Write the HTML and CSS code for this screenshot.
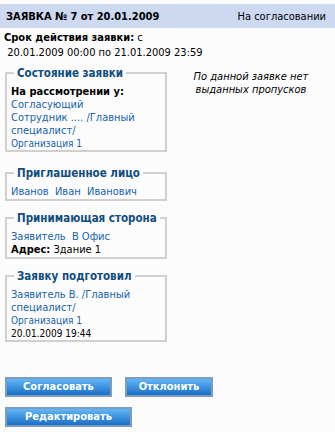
FILE: index.html
```html
<!DOCTYPE html>
<html lang="ru">
<head>
<meta charset="utf-8">
<title>Заявка № 7</title>
<link rel="stylesheet" href="styles.css">
</head>
<body>
<div class="header">
  <span class="header-title">ЗАЯВКА № 7 от 20.01.2009</span>
  <span class="header-status">На согласовании</span>
</div>
<div class="validity">
  <b>Срок действия заявки:</b> с<br>
  &nbsp;20.01.2009 00:00 по 21.01.2009 23:59
</div>
<div class="main">
  <div class="left">
    <fieldset class="box box-state">
      <legend>Состояние заявки</legend>
      <div class="line"><b>На рассмотрении у:</b></div>
      <div class="line link">Согласующий</div>
      <div class="line link">Сотрудник .... /Главный</div>
      <div class="line link">специалист/</div>
      <div class="line link small">Организация 1</div>
    </fieldset>
    <fieldset class="box box-guest">
      <legend>Приглашенное лицо</legend>
      <div class="line link">Иванов&nbsp; Иван&nbsp; Иванович</div>
    </fieldset>
    <fieldset class="box box-host">
      <legend>Принимающая сторона</legend>
      <div class="line link">Заявитель&nbsp; В Офис</div>
      <div class="line"><b>Адрес:</b> Здание 1</div>
    </fieldset>
    <fieldset class="box box-author">
      <legend>Заявку подготовил</legend>
      <div class="line link">Заявитель В. /Главный</div>
      <div class="line link">специалист/</div>
      <div class="line link small">Организация 1</div>
      <div class="line small">20.01.2009 19:44</div>
    </fieldset>
  </div>
  <div class="right">
    <div class="note">По данной заявке нет<br>выданных пропусков</div>
  </div>
</div>
<div class="buttons">
  <div class="btn-row">
    <button class="btn btn-approve">Согласовать</button>
    <button class="btn btn-reject">Отклонить</button>
  </div>
  <div class="btn-row">
    <button class="btn btn-edit">Редактировать</button>
  </div>
</div>
</body>
</html>
```

FILE: styles.css
```css
html, body {
  margin: 0;
  padding: 0;
  background: #fcfcfc;
}
body {
  font-family: "DejaVu Sans Condensed", "DejaVu Sans", sans-serif;
  font-size: 11px;
  color: #000;
}
.header {
  margin-top: 4px;
  height: 24px;
  background: #ccd9f0;
  display: flex;
  justify-content: space-between;
  align-items: center;
  padding: 0 9px 0 6px;
}
.header-title {
  font-weight: bold;
}
.validity {
  margin-top: 2px;
  padding-left: 4px;
  line-height: 15px;
}
.main {
  display: flex;
  margin-top: 6px;
}
.left {
  width: 167px;
  flex: none;
}
.right {
  flex: 1;
  text-align: center;
  padding-top: 4px;
}
.note {
  font-style: italic;
  line-height: 13px;
}
.box {
  box-sizing: border-box;
  width: 162px;
  margin: 0 0 0 5px;
  border: 2px solid #d0d0d0;
  padding: 5px 4px 0 4px;
  min-width: 0;
}
.box legend {
  margin-left: 3px;
  padding: 0 3px;
  font-size: 11.5px;
  font-weight: bold;
  line-height: 14px;
  white-space: nowrap;
  color: #0f4c80;
}
.box-guest { margin-top: 14px; padding-bottom: 1px; }
.box-host { margin-top: 10px; padding-bottom: 1px; }
.box-author { margin-top: 10px; }
.line {
  line-height: 13px;
  white-space: nowrap;
}
.link {
  color: #1762ad;
}
.small {
  font-size: 10px;
}
.buttons {
  margin-top: 35px;
  padding-left: 5px;
  display: flex;
  flex-direction: column;
  gap: 10px;
}
.btn-row {
  display: flex;
  gap: 13px;
}
.btn {
  box-sizing: border-box;
  height: 20px;
  margin: 0;
  padding: 0;
  border: 2px solid #7e9dbd;
  background: linear-gradient(#62b6f8, #1b6ec5);
  color: #fff;
  font-family: "DejaVu Sans Condensed", "DejaVu Sans", sans-serif;
  font-size: 11px;
  font-weight: bold;
  line-height: 16px;
}
.btn-approve { width: 107px; }
.btn-reject { width: 88px; }
.btn-edit { width: 127px; }
```
